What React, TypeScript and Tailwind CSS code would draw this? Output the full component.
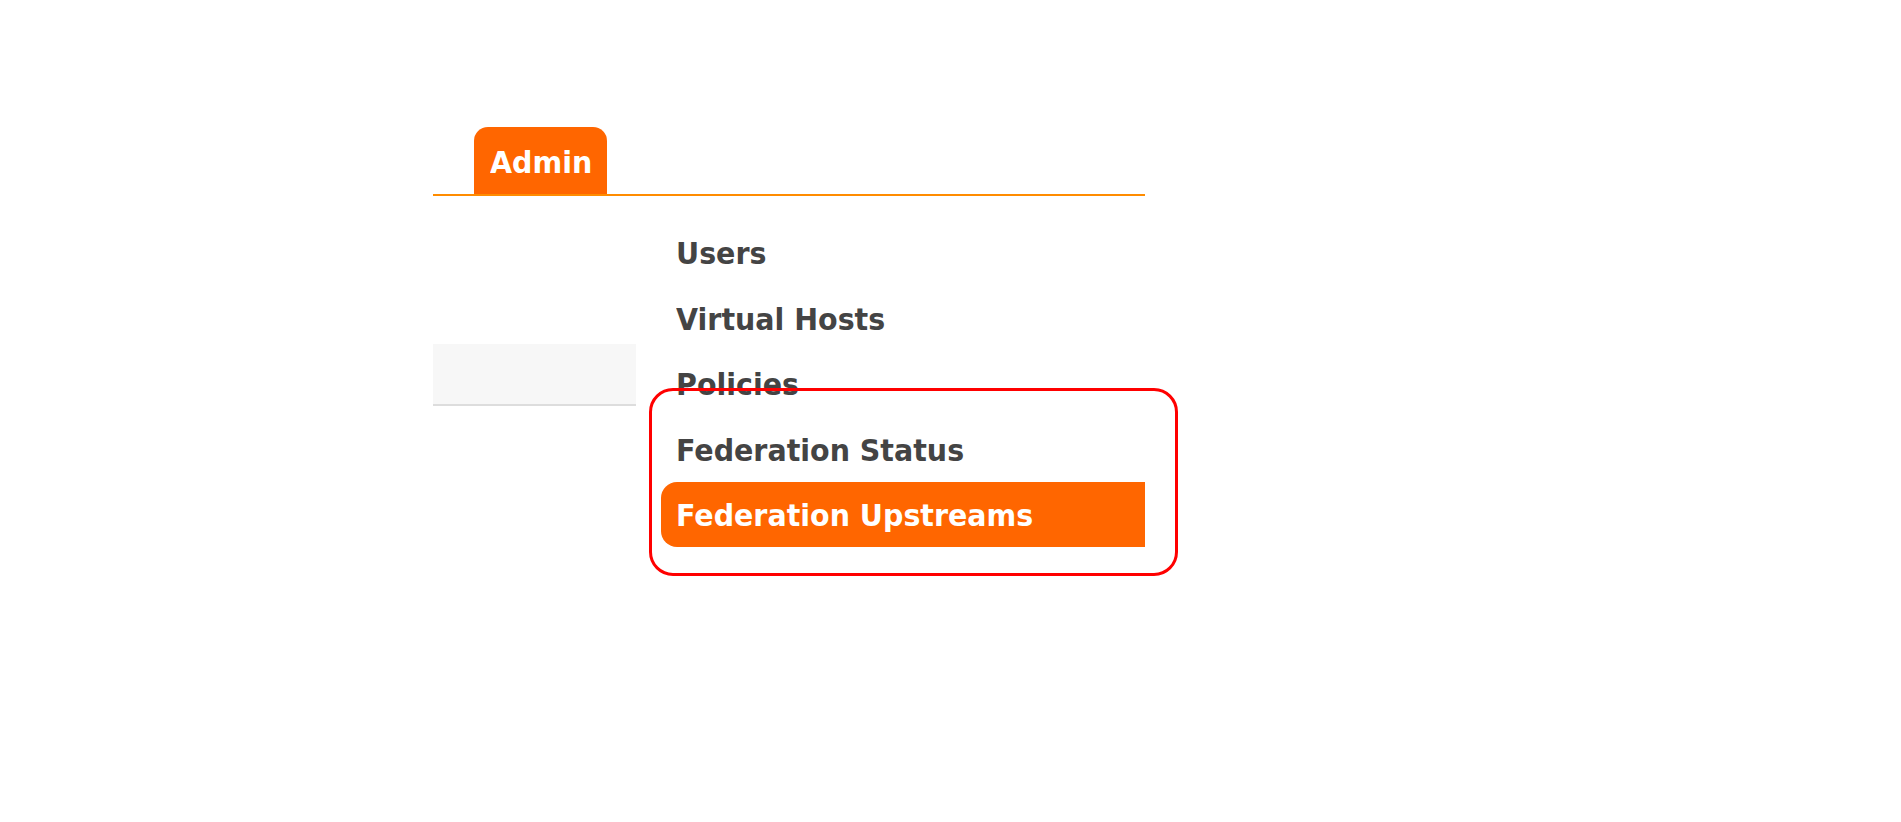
const items = ['Users', 'Virtual Hosts', 'Policies', 'Federation Status', 'Federation Upstreams'];
const active = 'Federation Upstreams';

export default function App(): React.JSX.Element {
  return (
    <div className="min-h-screen bg-white pt-[127px] font-['DejaVu_Sans',Verdana,sans-serif] font-bold text-[28.5px]">
      <div className="ml-[433px] w-[712px]">
        {/* tab strip */}
        <div className="flex border-b-2 border-[#ff8c00] pl-[41px]">
          <div className="h-[67px] rounded-t-[14px] bg-[#ff6600] pl-[16px] pr-[15px] pt-[19px] leading-[33px] text-white">
            <span className="inline-block scale-y-[1.08]">Admin</span>
          </div>
        </div>

        <div className="flex">
          {/* left column */}
          <div className="w-[203px] pt-[148px]">
            <div className="h-[62px] border-b-2 border-[#dddddd] bg-[#f7f7f7]" />
          </div>

          {/* admin menu */}
          <div className="relative ml-[25px] flex-1 pt-[24px]">
            {items.map((label) => (
              <div
                key={label}
                className={
                  label === active
                    ? 'h-[65px] rounded-l-[16px] bg-[#ff6600] pl-[15px] pt-[3px] leading-[62px] text-white'
                    : 'h-[65.5px] pl-[15px] pt-[3px] leading-[62.5px] text-[#444444]'
                }
              >
                <span className="inline-block scale-y-[1.08]">{label}</span>
              </div>
            ))}
            <div className="pointer-events-none absolute left-[-12px] top-[192px] h-[188px] w-[529px] rounded-[24px] border-[3px] border-[#ff0000]" />
          </div>
        </div>
      </div>
    </div>
  );
}
